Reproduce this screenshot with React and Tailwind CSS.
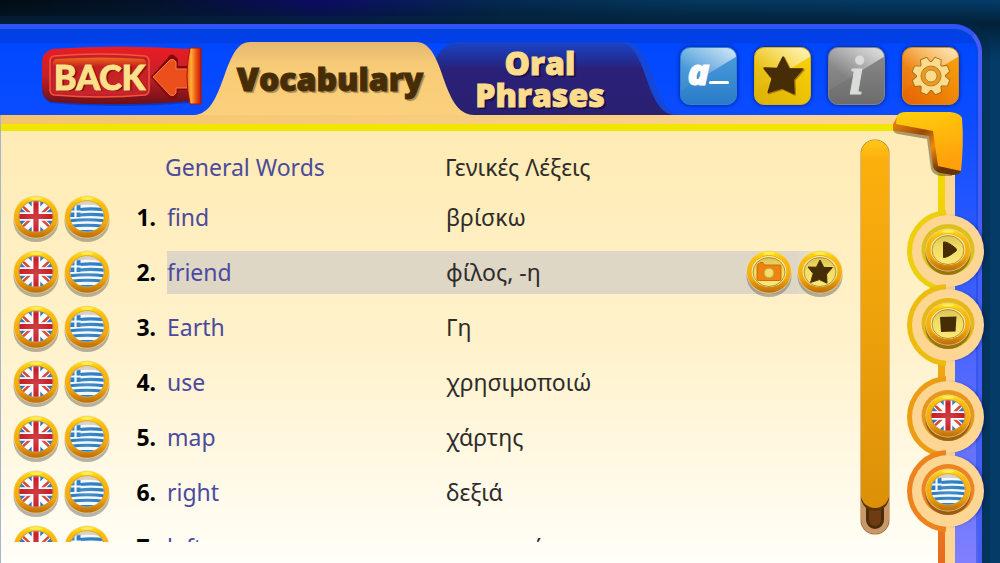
import React, { useState } from 'react';

const WORDS = [
  { en: 'find', el: 'βρίσκω' },
  { en: 'friend', el: 'φίλος, -η' },
  { en: 'Earth', el: 'Γη' },
  { en: 'use', el: 'χρησιμοποιώ' },
  { en: 'map', el: 'χάρτης' },
  { en: 'right', el: 'δεξιά' },
  { en: 'left', el: 'αριστερά' },
];

const STAR = 'M0 -12 L3.8 -4.6 L12.4 -4.4 L6.6 2.2 L7 11.2 L-0.6 7.6 L-9.4 10.4 L-6.8 1.6 L-12 -5 L-3.6 -4.8 Z';

/* Gradients shared by every coin and button on the page */
const Defs = () => (
  <svg className="absolute h-0 w-0" aria-hidden="true">
    <defs>
      <linearGradient id="gold" x1="0" y1="0" x2="0" y2="1">
        <stop offset="0" stopColor="#ffe21a" />
        <stop offset="0.2" stopColor="#fcbc0c" />
        <stop offset="0.65" stopColor="#f4a90f" />
        <stop offset="1" stopColor="#bd6c08" />
      </linearGradient>
      <linearGradient id="face" x1="0" y1="0" x2="0" y2="1">
        <stop offset="0" stopColor="#d9c458" />
        <stop offset="0.4" stopColor="#f2dc62" />
        <stop offset="1" stopColor="#fbe87c" />
      </linearGradient>
      <radialGradient id="gloss" cx="0.5" cy="0.55" r="0.55">
        <stop offset="0" stopColor="#fff" stopOpacity="0.15" />
        <stop offset="0.75" stopColor="#fff" stopOpacity="0" />
        <stop offset="1" stopColor="#5a3a2a" stopOpacity="0.4" />
      </radialGradient>
      <clipPath id="coinFace">
        <ellipse cx="23" cy="22.5" rx="16.8" ry="15.2" />
      </clipPath>
    </defs>
  </svg>
);

const UkFlag = () => (
  <g clipPath="url(#coinFace)">
    <rect x="4" y="5" width="38" height="36" fill="#2f6fc0" />
    <path d="M4 4 L42 41 M42 4 L4 41" stroke="#fff" strokeWidth="8.5" />
    <path d="M5 8 L20 22 M41 8 L26 22 M5 37 L20 23 M41 37 L26 23" stroke="#d8402f" strokeWidth="2.4" />
    <path d="M23 5 V41 M4 22.5 H42" stroke="#fff" strokeWidth="8.6" />
    <path d="M23 5 V41 M4 22.5 H42" stroke="#c81e26" strokeWidth="5.2" />
    <rect x="4" y="5" width="38" height="36" fill="url(#gloss)" />
  </g>
);

const GreeceFlag = () => (
  <g clipPath="url(#coinFace)">
    <rect x="4" y="5" width="38" height="36" fill="#f4f8fb" />
    <path d="M16 15.500 Q28 14 42 16 M16 21 Q28 19.500 42 21.500 M4 27 Q24 24.500 42 27 M4 32.500 Q24 30 42 32.500 M4 37.500 H42" fill="none" stroke="#2a7cc0" strokeWidth="3.2" />
    <path d="M4 10 H16.500 V23 H4 Z" fill="#2a7cc0" />
    <path d="M11.500 10 V24 M4 17.500 H17" stroke="#f4f8fb" strokeWidth="2.2" />
    <path d="M6 13 C14 4 32 4 40 13 C30 10 16 10 6 13 Z" fill="#d8cdbc" opacity="0.9" />
    <rect x="4" y="5" width="38" height="36" fill="url(#gloss)" />
  </g>
);

const Face = ({ children }) => (
  <>
    <ellipse cx="23" cy="22.5" rx="17.5" ry="15.5" fill="#fff0a8" />
    <ellipse cx="23" cy="23" rx="16" ry="14.5" fill="url(#face)" stroke="#a8841f" strokeWidth="0.9" />
    {children}
  </>
);

const FACES = {
  uk: <UkFlag />,
  greece: <GreeceFlag />,
  camera: (
    <Face>
      <path d="M11.500 16 l1 -1.500 h0.500 l1 -1 h3 l0.500 1 l1 1.500 h15.500 q1 0 1 1 v13 q0 1.500 -1.500 1.500 h-21 q-1.500 0 -1.500 -1.500 v-13 z" fill="#ee8410" stroke="#c9640b" strokeWidth="0.9" />
      <circle cx="23" cy="24" r="4.8" fill="#f4de66" stroke="#b9a05a" strokeWidth="0.9" />
    </Face>
  ),
  star: (
    <Face>
      <path d={STAR} transform="translate(23 23)" fill="#472d06" stroke="#472d06" strokeWidth="1" strokeLinejoin="round" />
    </Face>
  ),
  play: (
    <Face>
      <path d="M18.500 15 Q22 14 31 21.500 Q32 23 31 24 Q23 30.500 18.500 30.500 Z" fill="#472d06" stroke="#472d06" strokeLinejoin="round" />
    </Face>
  ),
  stop: (
    <Face>
      <path d="M15 16 L31.500 15.500 L30.500 30.500 L16 31 Z" fill="#472d06" />
    </Face>
  ),
};

const Coin = ({ face, label, sunk }) => (
  <button type="button" aria-label={label} className="block shrink-0 cursor-pointer">
    <svg className="block h-12 w-[46px] overflow-visible" viewBox="0 0 46 48">
      {sunk ? (
        <>
          <ellipse cx="23" cy="22.5" rx="26.5" ry="25.5" fill={sunk} />
          <ellipse cx="23" cy="27" rx="22.5" ry="21" fill="#5b3a08" opacity="0.55" />
        </>
      ) : (
        <ellipse cx="23" cy="27.500" rx="22.500" ry="20.500" fill="#6e6a60" opacity="0.5" />
      )}
      <ellipse cx="23" cy="23" rx="22.500" ry="21.500" fill="#e9d9a0" />
      <ellipse cx="23" cy="23" rx="22" ry="20.800" fill="url(#gold)" />
      <ellipse cx="23" cy="22.500" rx="17.600" ry="16" fill="#d8980f" />
      {FACES[face]}
      <ellipse cx="23" cy="4.500" rx="6" ry="1.400" fill="#fff26a" opacity="0.8" />
    </svg>
  </button>
);

const BackButton = () => (
  <button type="button" className="relative h-[58px] w-40 shrink-0 cursor-pointer">
    <svg className="absolute inset-0 h-full w-full overflow-visible" viewBox="0 0 160 58" aria-hidden="true">
      <defs>
        <linearGradient id="backRed" x1="0" y1="0" x2="0" y2="1">
          <stop offset="0" stopColor="#ea1c24" />
          <stop offset="0.5" stopColor="#c5202a" />
          <stop offset="1" stopColor="#6c1016" />
        </linearGradient>
        <linearGradient id="backPlate" x1="0" y1="0" x2="0" y2="1">
          <stop offset="0" stopColor="#ef6a1c" />
          <stop offset="0.25" stopColor="#c4221f" />
          <stop offset="1" stopColor="#c8252c" />
        </linearGradient>
        <linearGradient id="backCap" x1="0" y1="0" x2="1" y2="0">
          <stop offset="0" stopColor="#ee6a14" />
          <stop offset="0.3" stopColor="#fbb03a" />
          <stop offset="0.7" stopColor="#e84a0c" />
          <stop offset="1" stopColor="#c81808" />
        </linearGradient>
      </defs>
      <path d="M8 3 Q75 -3 148 3 V55 Q75 61 8 55 Q1 51 0 43 V14 Q1 6 8 3 Z" fill="#0a2c9c" transform="translate(0 1)" opacity="0.6" />
      <path d="M10 2 Q75 -3 148 2 V54 Q75 60 10 55 Q1 52 0 43 V14 Q1 5 10 2 Z" fill="url(#backRed)" />
      <path d="M12 9 Q60 5 103 9 Q107 10 107 14 V43 Q107 47 103 48 Q60 52 12 48 Q8 47 8 43 V14 Q8 10 12 9 Z" fill="#c5202a" stroke="#f4553c" strokeWidth="1.500" />
      <path d="M14 12 Q60 9 101 12 Q104 13 104 16 V42 Q104 45 101 46 Q60 48 14 46 Q11 45 11 42 V16 Q11 13 14 12 Z" fill="url(#backPlate)" />
      <path d="M109 30 L128 8 Q131 6 136 12 V19 H148 V43 H136 V50 Q130 55 127 51 Z" fill="#86080e" />
      <path d="M111 30 L128 13 Q132 11 134 15 V22 H148 V41 H134 V46 Q132 50 128 48 Z" fill="#ea4f1c" stroke="#f9823a" strokeWidth="1" />
      <path d="M148 1 H159 V57 H148 Q142 29 148 1 Z" fill="url(#backCap)" stroke="#b80a06" strokeWidth="1" />
    </svg>
    <span className="absolute top-3 left-3 font-['Lato'] text-[34px] leading-9 font-black text-[#fce08a] [-webkit-text-stroke:1px_#fce08a] [text-shadow:2px_1px_1px_#6e0c10]">
      BACK
    </span>
  </button>
);

const VocabularyTab = ({ selected, onClick }) => (
  <button
    type="button"
    role="tab"
    aria-selected={selected}
    onClick={onClick}
    className="relative z-10 -ml-2 flex h-[73px] w-[280px] cursor-pointer items-center justify-center pr-2"
  >
    <svg className="absolute inset-0 h-full w-full" viewBox="0 0 280 73" preserveAspectRatio="none" aria-hidden="true">
      <defs>
        <linearGradient id="tabSand" x1="0" y1="0" x2="0" y2="1">
          <stop offset="0" stopColor="#e4b870" />
          <stop offset="0.35" stopColor="#f8cc76" />
          <stop offset="1" stopColor="#fbd07c" />
        </linearGradient>
      </defs>
      <path d="M0 73 C32 72 28 0 56 0 H222 C252 0 246 72 280 73 Z" fill="url(#tabSand)" />
    </svg>
    <span className="relative font-['Open_Sans'] text-[32px] leading-9 font-extrabold text-[#472d06] [-webkit-text-stroke:1px_#472d06] [text-shadow:2px_2px_1px_#a68a58]">
      Vocabulary
    </span>
  </button>
);

const PhrasesTab = ({ selected, onClick }) => (
  <button
    type="button"
    role="tab"
    aria-selected={selected}
    onClick={onClick}
    className="relative -ml-[42px] flex h-[73px] w-[248px] cursor-pointer items-center justify-center pr-8"
  >
    <svg className="absolute inset-0 h-full w-full" viewBox="0 0 248 73" preserveAspectRatio="none" aria-hidden="true">
      <defs>
        <linearGradient id="tabNavy" x1="0" y1="0" x2="0" y2="1">
          <stop offset="0" stopColor="#1745c8" />
          <stop offset="0.38" stopColor="#2a2078" />
          <stop offset="1" stopColor="#2a2070" />
        </linearGradient>
      </defs>
      <path d="M0 73 V26 Q8 0 28 0 H192 C224 0 218 68 248 73 Z" fill="#1548d8" />
      <path d="M0 73 V26 Q8 0 28 0 H186 C216 0 212 68 241 73 Z" fill="url(#tabNavy)" />
    </svg>
    <span className="relative w-40 text-center font-['Open_Sans'] text-[32px] leading-8 font-extrabold text-[#fddc8c] [-webkit-text-stroke:1px_#fddc8c] [text-shadow:2px_2px_1px_#140c48]">
      Oral Phrases
    </span>
  </button>
);

const Tile = ({ label, className, children }) => (
  <button
    type="button"
    aria-label={label}
    className={`relative flex h-[58px] w-[57px] cursor-pointer items-center justify-center overflow-hidden rounded-[10px] border shadow-[0_0_4px_#001a80] ${className}`}
  >
    <svg className="absolute inset-0 h-full w-full" viewBox="0 0 57 58" aria-hidden="true">
      <path d="M0 0 H57 V9 L0 44 Z" fill="url(#tileShine)" />
      <defs>
        <linearGradient id="tileShine" x1="0" y1="1" x2="1" y2="0">
          <stop offset="0.300" stopColor="#fff" stopOpacity="0.05" />
          <stop offset="1" stopColor="#fff" stopOpacity="0.75" />
        </linearGradient>
      </defs>
    </svg>
    {children}
  </button>
);

const teeth = [0, 45, 90, 135, 180, 225, 270, 315];

const GearIcon = () => (
  <svg className="relative h-10 w-10" viewBox="-20 -20 40 40">
    <g fill="#fbdc8c" stroke="#a3691c" strokeWidth="1.800" strokeLinejoin="round">
      {teeth.map((a) => (
        <path key={a} d="M-5 -12 L-3 -18.500 H3 L5 -12 Z" transform={`rotate(${a + 22})`} />
      ))}
      <circle r="14" />
    </g>
    <g fill="#fbdc8c">
      {teeth.map((a) => (
        <path key={a} d="M-5 -12 L-3 -18.500 H3 L5 -12 Z" transform={`rotate(${a + 22})`} />
      ))}
      <circle r="14" />
    </g>
    <circle r="8" fill="#fbdc8c" stroke="#ee9a1c" strokeWidth="3.600" />
    <circle r="10" fill="none" stroke="#a3691c" strokeWidth="0.800" />
    <circle r="6" fill="none" stroke="#a3691c" strokeWidth="0.800" />
  </svg>
);

const Toolbar = () => (
  <div className="ml-auto flex gap-[17px]">
    <Tile label="Spelling" className="border-[#2a86d4] bg-linear-to-b from-[#4ea0dc] to-[#2a7cc8]">
      <span className="relative pb-2 font-['Open_Sans'] text-4xl leading-9 font-extrabold text-white italic [-webkit-text-stroke:1px_#fff]">a</span>
      <span className="relative mt-3 h-[3px] w-5 rounded-full bg-white" />
    </Tile>
    <Tile label="Favourites" className="border-[#d8b010] bg-linear-to-tr from-[#dcb008] to-[#fcd404]">
      <svg className="relative h-11 w-11" viewBox="-14 -14 28 28">
        <path d={STAR} transform="translate(0.500 0.500)" fill="#b07c08" stroke="#b07c08" strokeWidth="1.600" strokeLinejoin="round" />
        <path d={STAR} fill="#472d06" stroke="#472d06" strokeWidth="1" strokeLinejoin="round" />
      </svg>
    </Tile>
    <Tile label="Information" className="border-[#808488] bg-linear-to-b from-[#8c8c8c] to-[#6c6c6c]">
      <span className="relative font-['Liberation_Serif'] text-[54px] leading-[54px] font-bold text-[#dadcda] italic [-webkit-text-stroke:1px_#dadcda]">i</span>
    </Tile>
    <Tile label="Settings" className="border-[#d88a10] bg-linear-to-tr from-[#e46004] to-[#f8a80c]">
      <GearIcon />
    </Tile>
  </div>
);

const WordRow = ({ word, number, active, onSelect }) => (
  <li className="flex h-[55px] items-center text-[23px]">
    <div className="flex gap-[5px]">
      <Coin face="uk" label={`Play ${word.en} in English`} />
      <Coin face="greece" label={`Play ${word.en} in Greek`} />
    </div>
    <span className="w-[46px] text-right font-bold text-black">{number}.</span>
    <div
      onClick={onSelect}
      className={`ml-[11px] flex h-[43px] flex-1 items-center ${active ? 'bg-linear-to-r from-[#ded7c6] from-93% to-transparent' : ''}`}
    >
      <span className="w-[279px] text-[#4c4a9e]">{word.en}</span>
      <span className="flex-1 text-[#2e2c2a]">{word.el}</span>
      {active && (
        <div className="flex gap-[5px]">
          <Coin face="camera" label="Show picture" />
          <Coin face="star" label="Add to favourites" />
        </div>
      )}
    </div>
  </li>
);

const Medallion = ({ ring, children }) => (
  <div className={`flex h-[82px] w-[82px] items-center justify-center rounded-full ${ring}`}>
    <div className="flex h-[72px] w-[72px] items-center justify-center rounded-full bg-[#fdd694] shadow-[3px_0_3px_-1px_#00107055]">
      {children}
    </div>
  </div>
);

const CornerPiece = () => (
  <svg className="pointer-events-none absolute -top-[4px] right-[14px] h-[68px] w-[72px]" viewBox="0 0 72 68" aria-hidden="true">
    <defs>
      <linearGradient id="cornerTop" x1="0" y1="0" x2="0.300" y2="1">
        <stop offset="0" stopColor="#ffd00c" />
        <stop offset="1" stopColor="#ffa00c" />
      </linearGradient>
      <linearGradient id="cornerSide" x1="0" y1="0" x2="1" y2="1">
        <stop offset="0" stopColor="#f28c10" />
        <stop offset="0.350" stopColor="#9c4a08" />
        <stop offset="0.550" stopColor="#f08a10" />
        <stop offset="0.800" stopColor="#6a3204" />
      </linearGradient>
    </defs>
    <path d="M1 14 L1 19 Q2 22 6 23 L35 28 L39 58 Q41 64 49 65 L60 65 V50 L40 20 Z" fill="#5c4a20" opacity="0.500" />
    <path d="M5 6 L1 13 V17 Q2 20 5 20 L37 25 L41 56 Q43 61 49 62 L60 64 Q68 64 69 60 L60 20 Z" fill="url(#cornerSide)" />
    <path d="M5 5 Q7 1 14 1 H58 Q68 2 70 7 Q72 32 69 60 L46 55 L41 20 L4 13 Z" fill="url(#cornerTop)" />
  </svg>
);

const App = () => {
  const [tab, setTab] = useState('vocabulary');
  const [active, setActive] = useState(1);

  return (
    <div className="flex h-screen flex-col overflow-hidden bg-[linear-gradient(to_bottom,transparent,#021a2ecc_24px,transparent_60px),linear-gradient(to_right,#020c12,#04122a_15%,#0c0a64_32%,#052a50_50%,#04385e_70%,#043c68)] font-['Noto_Sans',sans-serif]">
      <Defs />
      <div className="mt-6 mr-[18px] flex min-h-0 flex-1 flex-col rounded-tr-[28px] border-t-[5px] border-r-4 border-t-[#2e54f8] border-r-[#4a5cf8] bg-[linear-gradient(#0040e6_14px,#0048ff_15px,#0c4cff_90px,#5068ff_340px,#8080ff)] shadow-[0_0_0_8px_#04284866,inset_-2px_2px_0_#0a46c866]">
        <header className="flex h-[86px] shrink-0 items-center pt-[8px] pr-[21px] pl-[42px]">
          <BackButton />
          <div role="tablist" className="flex self-end">
            <VocabularyTab selected={tab === 'vocabulary'} onClick={() => setTab('vocabulary')} />
            <PhrasesTab selected={tab === 'phrases'} onClick={() => setTab('phrases')} />
          </div>
          <Toolbar />
        </header>

        <main className="relative flex min-h-0 flex-1 pr-[23px]">
          <section className="flex min-w-0 flex-1 flex-col border-l border-[#a8b4c8] bg-[#fdd694]">
            <div className="h-[9px] shrink-0 bg-linear-to-r from-[#f4c46c] to-[#fdd694]" />
            <div className="h-[7px] shrink-0 bg-[#f0e600]" />
            <div className="flex min-h-0 flex-1 bg-[linear-gradient(#ffebb4,#fff2cc_50%,#fffef8)]">
              <ul className="mb-[21px] flex-1 overflow-hidden pt-[14px] pl-3">
                <li className="flex h-[45px] items-center pl-[152px] text-[23px]">
                  <h2 className="w-[280px] text-[#4c4a9e]">General Words</h2>
                  <span className="text-[#2e2c2a]">Γενικές Λέξεις</span>
                </li>
                {WORDS.map((word, i) => (
                  <WordRow
                    key={word.en}
                    word={word}
                    number={i + 1}
                    active={i === active}
                    onSelect={() => setActive(i)}
                  />
                ))}
              </ul>
              <div className="mt-2 mr-12 mb-7 ml-[17px] w-[30px] rounded-full border border-[#d8b888] bg-[#c89868]">
                <div className="flex h-full flex-col rounded-full bg-[#6e3c10] shadow-[inset_0_0_0_5px_#c89868,inset_0_0_0_8px_#4a2c08]">
                  <div className="mb-[26px] flex-1 rounded-full bg-linear-to-b from-[#ffc814] via-[#fcb00e] via-5% to-[#dc9008] shadow-[0_3px_0_#5a3408]" />
                </div>
              </div>
            </div>
          </section>
          <div className="mt-[9px] w-[7px] shrink-0 bg-linear-to-b from-[#f0e600] via-[#eeb010] to-[#e86a20]" />
          <div className="w-[10px] shrink-0 bg-[#fdd694]" />

          <nav aria-label="Playback" className="absolute top-[95px] -right-[11px] flex flex-col gap-[10px]">
            <div className="flex flex-col -space-y-2">
              <Medallion ring="bg-[linear-gradient(to_right,#ecd00e_47%,transparent_47%)]">
                <Coin face="play" label="Play" sunk="#dcc020" />
              </Medallion>
              <Medallion ring="bg-[linear-gradient(to_right,#eebc0e_47%,transparent_47%)]">
                <Coin face="stop" label="Stop" sunk="#e4b818" />
              </Medallion>
            </div>
            <div className="flex flex-col -space-y-2">
              <Medallion ring="bg-[linear-gradient(to_right,#ee9c14_47%,transparent_47%)]">
                <Coin face="uk" label="English" sunk="#e8961c" />
              </Medallion>
              <Medallion ring="bg-[linear-gradient(to_right,#ee821c_47%,transparent_47%)]">
                <Coin face="greece" label="Greek" sunk="#ec8424" />
              </Medallion>
            </div>
          </nav>
          <CornerPiece />
        </main>
      </div>
    </div>
  );
};

export default App;
